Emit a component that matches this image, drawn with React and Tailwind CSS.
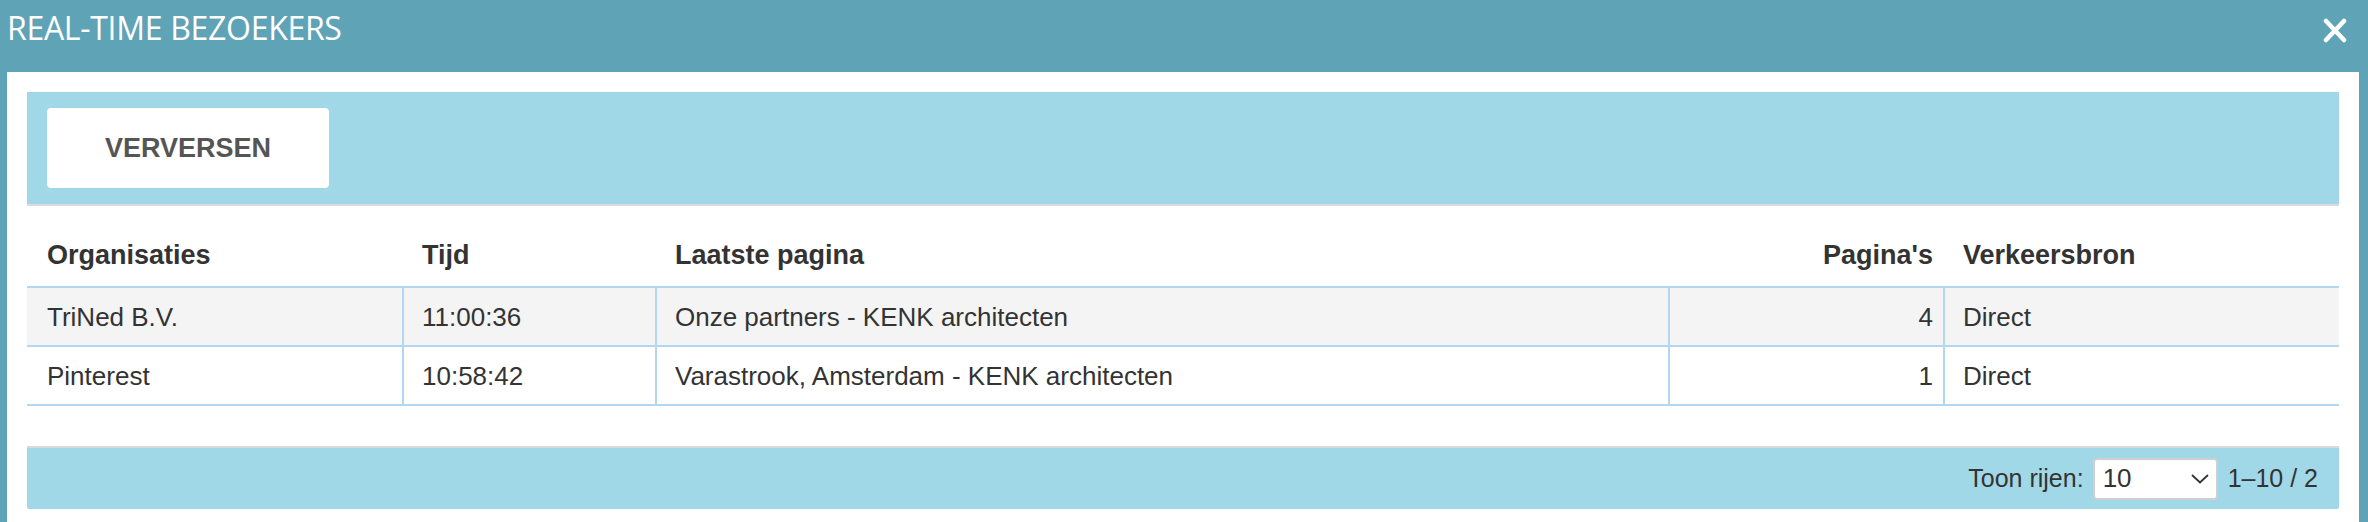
import { useState } from 'react';

const COLS = ['w-[375px]', 'w-[253px]', 'w-[1013px]', 'w-[275px]', 'flex-1'];

const rows = [
  { org: 'TriNed B.V.', time: '11:00:36', page: 'Onze partners - KENK architecten', pages: 4, source: 'Direct' },
  { org: 'Pinterest', time: '10:58:42', page: 'Varastrook, Amsterdam - KENK architecten', pages: 1, source: 'Direct' },
];

export default function App() {
  const [perPage, setPerPage] = useState('10');

  return (
    <div className="w-[2368px] h-[522px] overflow-hidden bg-[#5fa3b7] font-['Liberation_Sans',Arial,sans-serif] text-[#333]">
      {/* title bar */}
      <div className="h-[72px] flex justify-between items-start">
        <h1 className="pl-[7px] pt-[4px] text-white text-[32px] tracking-[-0.3px] font-normal font-['Open_Sans',sans-serif]">
          REAL-TIME BEZOEKERS
        </h1>
        <button className="mt-[18px] mr-[21px] text-white">
          <svg width="24" height="25" viewBox="0 0 24 25">
            <path d="M3 3 L21 22 M21 3 L3 22" stroke="#fff" strokeWidth="4.5" strokeLinecap="round" fill="none" />
          </svg>
        </button>
      </div>

      <div className="ml-[7px] mr-[9px] h-[450px] bg-white px-[20px] pt-[20px]">
        {/* toolbar */}
        <div className="bg-[#a1d8e7] border-b-2 border-[#dcdcdc] py-[16px] pl-[20px]">
          <button className="w-[282px] h-[80px] bg-white rounded-[4px] text-[27px] font-bold text-[#555]">
            VERVERSEN
          </button>
        </div>

        {/* table head */}
        <div className="flex border-b-2 border-[#b3d7f3] pt-[34px] pb-[15px] text-[27px] leading-[31px] font-bold">
          <div className={`${COLS[0]} pl-[20px]`}>Organisaties</div>
          <div className={`${COLS[1]} pl-[20px]`}>Tijd</div>
          <div className={`${COLS[2]} pl-[20px]`}>Laatste pagina</div>
          <div className={`${COLS[3]} pr-[10px] text-right`}>Pagina's</div>
          <div className={`${COLS[4]} pl-[20px]`}>Verkeersbron</div>
        </div>

        {/* table body */}
        {rows.map((r, i) => (
          <div
            key={r.org}
            className={`flex h-[59px] border-b-2 border-[#b3d7f3] text-[26px] leading-[30px] ${i % 2 === 0 ? 'bg-[#f4f4f4]' : 'bg-white'}`}
          >
            <div className={`${COLS[0]} pl-[20px] flex items-center`}>{r.org}</div>
            <div className={`${COLS[1]} pl-[18px] flex items-center border-l-2 border-[#b3d7f3]`}>{r.time}</div>
            <div className={`${COLS[2]} pl-[18px] flex items-center border-l-2 border-[#b3d7f3]`}>{r.page}</div>
            <div className={`${COLS[3]} pr-[10px] flex items-center justify-end border-l-2 border-[#b3d7f3]`}>{r.pages}</div>
            <div className={`${COLS[4]} pl-[18px] flex items-center border-l-2 border-[#b3d7f3]`}>{r.source}</div>
          </div>
        ))}

        {/* footer */}
        <div className="mt-[40px] h-[63px] bg-[#a1d8e7] border-t-2 border-[#dadada] rounded-b-[2px] flex items-center justify-end pr-[21px] text-[25px]">
          <span>Toon rijen:</span>
          <div
            className="ml-[9px] w-[125px] h-[42px] bg-white border-2 border-[#cfcfcf] rounded-[4px] flex items-center justify-between pl-[8px] pr-[7px] text-[26px] cursor-pointer"
            onClick={() => setPerPage(perPage === '10' ? '25' : '10')}
          >
            <span>{perPage}</span>
            <svg width="18" height="10" viewBox="0 0 18 10">
              <path d="M1 1 L9 8.5 L17 1" stroke="#333" strokeWidth="1.8" fill="none" />
            </svg>
          </div>
          <span className="ml-[10px]">1–10 / 2</span>
        </div>
      </div>
    </div>
  );
}
